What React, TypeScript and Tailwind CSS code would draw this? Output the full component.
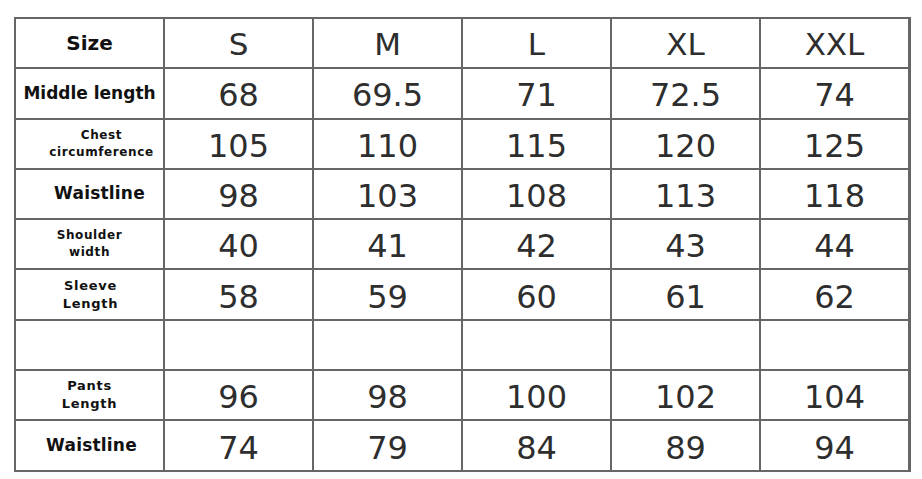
const SIZES = ['S', 'M', 'L', 'XL', 'XXL'];

type Row = { label: string[]; cls: string; values: string[] };

const ROWS: Row[] = [
  { label: ['Middle length'], cls: 'text-[17px]', values: ['68', '69.5', '71', '72.5', '74'] },
  { label: ['Chest', 'circumference'], cls: 'text-[12px] tracking-[0.6px] leading-[17px] pl-[24px]', values: ['105', '110', '115', '120', '125'] },
  { label: ['Waistline'], cls: 'text-[17px] tracking-[0.2px] pl-[20px]', values: ['98', '103', '108', '113', '118'] },
  { label: ['Shoulder', 'width'], cls: 'text-[12px] tracking-[0.6px] leading-[17px]', values: ['40', '41', '42', '43', '44'] },
  { label: ['Sleeve', 'Length'], cls: 'text-[13px] tracking-[0.7px] leading-[18px] pl-[2px]', values: ['58', '59', '60', '61', '62'] },
  { label: [], cls: '', values: ['', '', '', '', ''] },
  { label: ['Pants', 'Length'], cls: 'text-[13px] tracking-[0.7px] leading-[18px]', values: ['96', '98', '100', '102', '104'] },
  { label: ['Waistline'], cls: 'text-[17px] tracking-[0.2px] pl-[4px]', values: ['74', '79', '84', '89', '94'] },
];

function Cell({ children, className = '' }: { children?: React.ReactNode; className?: string }) {
  return (
    <div className={`bg-white h-[48.3px] flex flex-col items-center justify-center ${className}`}>
      {children}
    </div>
  );
}

export default function App() {
  return (
    <div className="w-[922px] h-[479px] bg-white pt-[17px] pl-[14px]" style={{ fontFamily: '"DejaVu Sans", Verdana, sans-serif' }}>
      <div className="w-[897px] grid grid-cols-[147px_repeat(5,147px)] gap-[2px] p-[2px] bg-[#666]">
        <Cell className="font-bold text-[20px] text-[#111]">Size</Cell>
        {SIZES.map((s) => (
          <Cell key={s} className="text-[31px] text-[#2e2e2e] pt-[3px]">{s}</Cell>
        ))}
        {ROWS.map((row, i) => (
          <div key={i} className="contents">
            <Cell className={`font-bold text-[#111] ${row.cls}`}>
              {row.label.map((l) => (
                <span key={l}>{l}</span>
              ))}
            </Cell>
            {row.values.map((v, j) => (
              <Cell key={j} className="text-[32px] text-[#2e2e2e] pt-[4px]">{v}</Cell>
            ))}
          </div>
        ))}
      </div>
    </div>
  );
}
